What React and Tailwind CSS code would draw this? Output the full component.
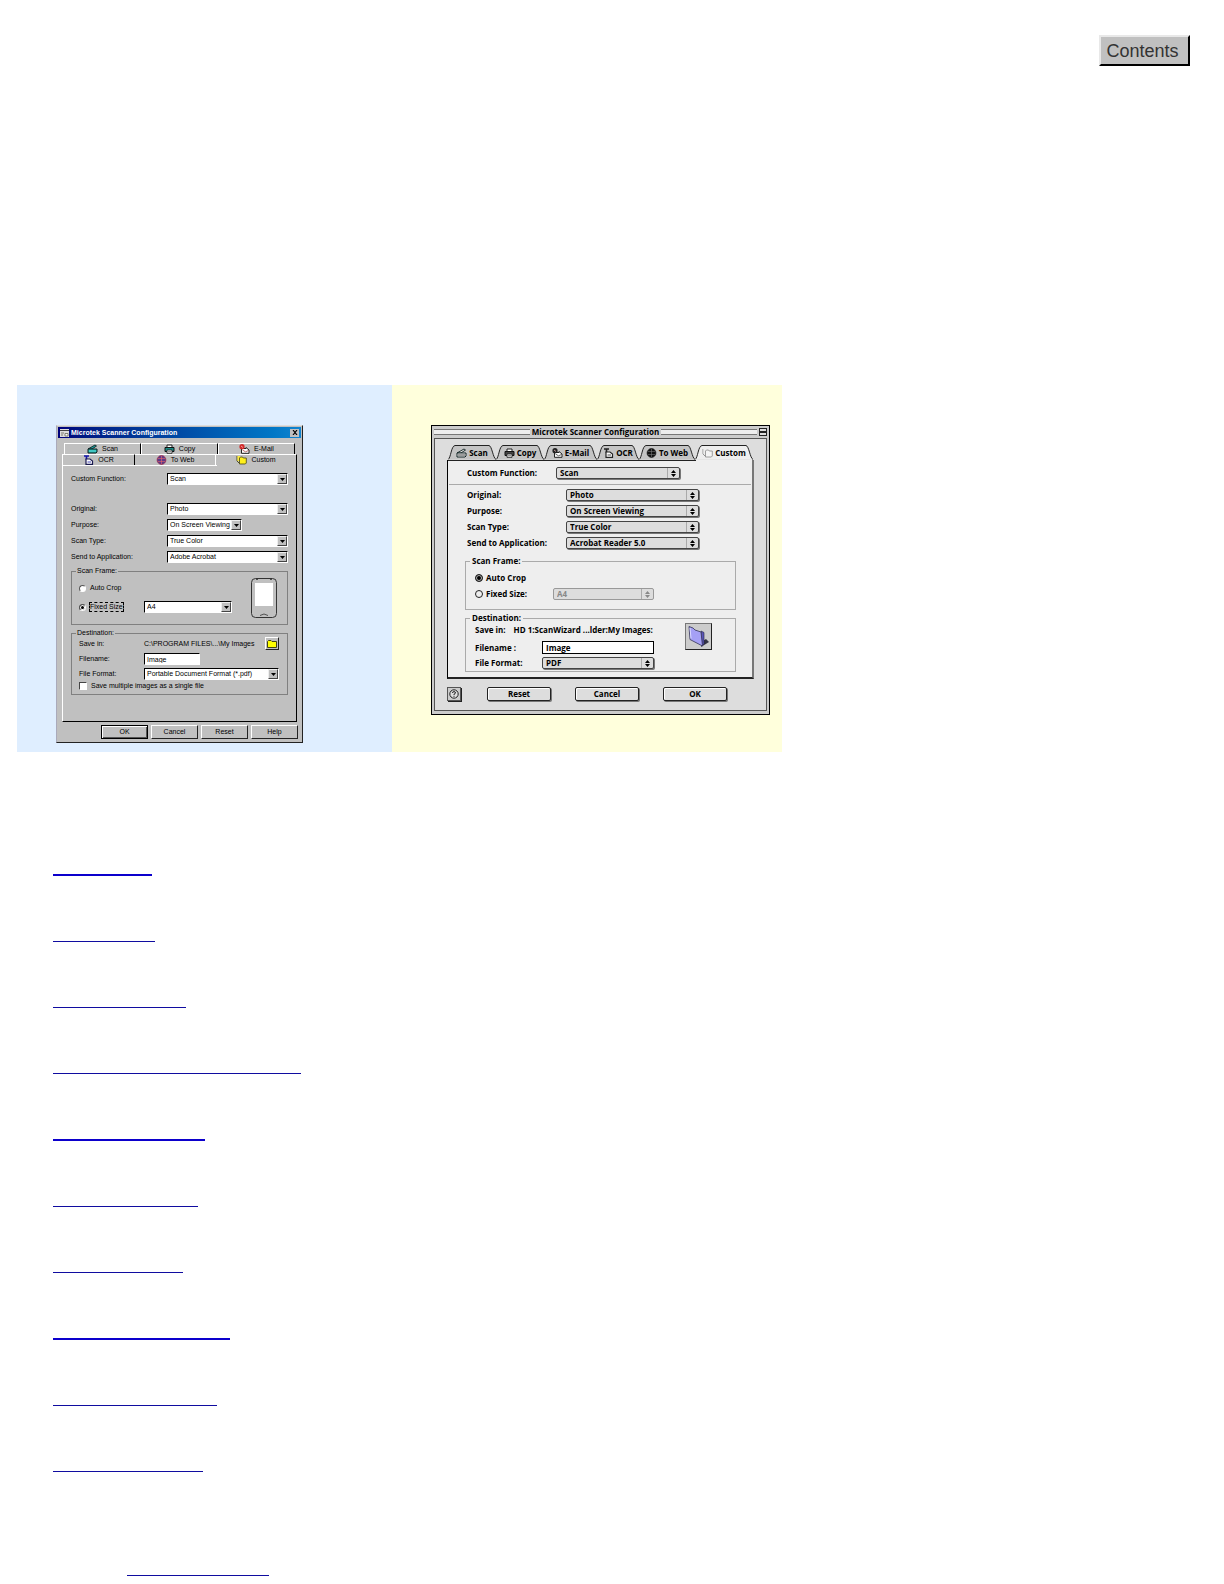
import { useState } from "react";
import clsx from "clsx";

const topics = [
  { label: "Overview", width: "w-[99px]", heading: true },
  { label: "Original", width: "w-[102px]" },
  { label: "Purpose", width: "w-[133px]" },
  { label: "Send to Application", width: "w-[248px]" },
  { label: "Scan Frame", width: "w-[152px]", heading: true },
  { label: "Auto Crop", width: "w-[145px]" },
  { label: "Fixed Size", width: "w-[130px]" },
  { label: "Destination", width: "w-[177px]", heading: true },
  { label: "Filename", width: "w-[164px]" },
  { label: "File Format", width: "w-[150px]" },
];

// Small toolbar icons, shared by both dialogs (color on Windows, dark on Mac)
function TabIcon({ name, mono }) {
  const c = (color) => (mono ? "#222" : color);
  return (
    <svg className="h-[10px] w-[11px] shrink-0" viewBox="0 0 11 10" aria-hidden="true">
      {name === "scan" && (
        <>
          <path d="M1 5 L8 1 L9.5 2 L5 5 Z" fill={mono ? "#ddd" : "#1aa5a5"} stroke="#122" strokeWidth="0.9" />
          <path d="M1 5 H10 V8 L9 9 H1 Z" fill={mono ? "#eee" : "#20b0a8"} stroke="#122" strokeWidth="1" />
          <path d="M2 7 H9" stroke={mono ? "#222" : "#7ee"} strokeWidth="0.8" />
        </>
      )}
      {name === "copy" && (
        <>
          <path d="M3 4 V1 H8 V4" fill="#fff" stroke="#222" strokeWidth="1" />
          <path d="M1 3.5 H10 V7.5 H1 Z" fill={mono ? "#444" : "#1b8a84"} stroke="#111" strokeWidth="1" />
          <path d="M3 6 H8 V9.3 H3 Z" fill="#fff" stroke="#222" strokeWidth="0.9" />
          <path d="M4 7.7 H7" stroke="#222" strokeWidth="0.6" />
        </>
      )}
      {name === "mail" && (
        <>
          <path d="M2.5 4.5 H7 V3.5 L10 6 V9.3 H2.5 Z" fill="#fff" stroke="#222" strokeWidth="1" />
          <path d="M3.5 6 L6.5 7.8 L9.5 6.5" fill="none" stroke={c("#933")} strokeWidth="0.7" />
          <circle cx="3" cy="2.7" r="2.6" fill={c("#d22b2b")} />
          <path d="M2 2 L4 3.5" stroke="#fcc" strokeWidth="0.7" />
        </>
      )}
      {name === "ocr" && (
        <>
          <path d="M1 1 H6 M3.5 1 V5" stroke={c("#1414a8")} strokeWidth="1.6" />
          <path d="M3 4 H7 L9.5 6 V9.3 H3 Z" fill="#fff" stroke={c("#1a1a50")} strokeWidth="1.2" />
          <path d="M4.5 7 H8" stroke={c("#1414a8")} strokeWidth="0.8" />
        </>
      )}
      {name === "web" && (
        <>
          <circle cx="5.5" cy="5" r="4.4" fill={mono ? "#111" : "#5a3a8c"} stroke={mono ? "#111" : "#a02040"} strokeWidth="0.7" />
          <path
            d="M2 3.5 H9 M2 6.5 H9 M5.5 1 V9"
            fill="none"
            stroke={mono ? "#777" : "#e66"}
            strokeWidth="0.6"
          />
        </>
      )}
      {name === "custom" && (
        <>
          <path d="M1 1 V6 L3.5 8.5" fill="none" stroke={mono ? "#888" : "#441"} strokeWidth="0.9" />
          <path d="M1.5 1 H4 V6 H1.5 Z" fill={mono ? "#eee" : "#ffec3d"} />
          <path
            d="M3.5 3 L4.5 2 H6.5 L7.3 3 H10.3 V8 L9.3 9 H3.5 Z"
            fill={mono ? "#f4f4f4" : "#fff01c"}
            stroke={mono ? "#888" : "#441"}
            strokeWidth="0.8"
          />
        </>
      )}
    </svg>
  );
}

/* ---------- Windows dialog ---------- */

function WinSelect({ id, value, className }) {
  return (
    <span
      className={clsx(
        "flex h-3 border border-t-black border-l-black border-r-white border-b-white bg-white",
        className
      )}
    >
      <select id={id} className="min-w-0 flex-1 appearance-none bg-white pl-[2px] leading-[10px] text-black outline-none">
        <option>{value}</option>
      </select>
      <span className="pointer-events-none flex w-[10px] items-center justify-center border border-t-[#eee] border-l-[#eee] border-r-[#444] border-b-[#444] bg-[#c0c0c0]">
        <svg className="h-[3px] w-[5px]" viewBox="0 0 5 3" aria-hidden="true">
          <path d="M0 0 H5 L2.5 3 Z" fill="#000" />
        </svg>
      </span>
    </span>
  );
}

function WinRow({ id, label, value, wide = true }) {
  return (
    <div className="flex h-3 items-center">
      <label htmlFor={id} className="w-[96px]">
        {label}
      </label>
      <WinSelect id={id} value={value} className={wide ? "w-[121px]" : "w-[75px]"} />
    </div>
  );
}

function WinTab({ icon, label, className }) {
  return (
    <button type="button" role="tab" className={clsx("flex items-center justify-center gap-1", className)}>
      <TabIcon name={icon} />
      {label}
    </button>
  );
}

function WinRadio({ id, label, checked, onChange }) {
  return (
    <span className="flex w-[65px] items-center gap-1">
      <input
        type="radio"
        id={id}
        name="win-frame"
        checked={checked}
        onChange={onChange}
        className="h-[7px] w-[7px] shrink-0 appearance-none rounded-full border border-t-[#555] border-l-[#555] border-r-white border-b-white bg-white checked:bg-black checked:shadow-[inset_0_0_0_1px_#fff]"
      />
      <label htmlFor={id} className={clsx("whitespace-nowrap", checked && "outline-1 outline-dashed outline-black")}>
        {label}
      </label>
    </span>
  );
}

function WindowsDialog() {
  const [frame, setFrame] = useState("fixed");
  const raised = "border border-t-white border-l-white border-r-[#222] border-b-[#222]";
  const tab = "h-[11px] border-t border-l border-r border-t-white border-l-white border-r-black";

  return (
    <section className="flex w-[247px] flex-col border border-t-[#ddd] border-l-[#aab] border-r-[#222] border-b-[#222] bg-[#c0c0c0] p-px font-['Liberation_Sans',Arial,sans-serif] text-[7px] leading-[8px] text-black">
      <header className="flex h-[11px] items-center gap-[2px] bg-linear-to-r from-[#00007b] to-[#1084d0] px-[2px] text-white">
        <svg className="h-[8px] w-[9px]" viewBox="0 0 9 8" aria-hidden="true">
          <rect width="9" height="8" fill="#ddd" />
          <path d="M0 1.5 H9" stroke="#444" />
          <path d="M1 4 H4 M1 6 H3 M5 4.5 H8 V7 H5 Z" stroke="#665" strokeWidth="0.8" fill="#fff" />
        </svg>
        <h2 className="flex-1 font-bold">Microtek Scanner Configuration</h2>
        <button type="button" aria-label="Close" className="flex h-[8px] w-[9px] items-center justify-center bg-[#c0c0c0]">
          <svg className="h-[5px] w-[6px]" viewBox="0 0 6 5" aria-hidden="true">
            <path d="M1 0 L5 5 M5 0 L1 5" stroke="#000" strokeWidth="1.2" />
          </svg>
        </button>
      </header>

      <div role="tablist" className="mx-1 mt-[5px]">
        <div className="flex px-[2px]">
          <WinTab icon="scan" label="Scan" className={clsx(tab, "flex-1")} />
          <WinTab icon="copy" label="Copy" className={clsx(tab, "flex-1")} />
          <WinTab icon="mail" label="E-Mail" className={clsx(tab, "flex-1")} />
        </div>
        <div className="flex">
          <WinTab icon="ocr" label="OCR" className={clsx(tab, "w-[73px]")} />
          <WinTab icon="web" label="To Web" className="h-[11px] w-[81px] border-t border-r border-white" />
          <WinTab icon="custom" label="Custom" className="h-[11px] flex-1 border-t border-r border-t-white border-r-black" />
        </div>
      </div>

      <div className="mx-1 border border-t-0 border-l-white border-r-black border-b-black pb-[26px]">
        <div className="flex">
          <span className="h-px w-[154px] bg-white" />
        </div>
        <div className="mx-2 mt-[7px] flex flex-col gap-1">
          <WinRow id="win-function" label="Custom Function:" value="Scan" />
          <div className="mt-[14px]">
            <WinRow id="win-original" label="Original:" value="Photo" />
          </div>
          <WinRow id="win-purpose" label="Purpose:" value="On Screen Viewing" wide={false} />
          <WinRow id="win-type" label="Scan Type:" value="True Color" />
          <WinRow id="win-send" label="Send to Application:" value="Adobe Acrobat" />

          <fieldset className="border border-[#808080] px-[7px] pb-[6px]">
            <legend className="ml-[-3px] px-px">Scan Frame:</legend>
            <div className="flex justify-between">
              <div className="flex flex-col gap-[7px] pt-[7px]">
                <div className="flex h-3 items-center">
                  <WinRadio
                    id="win-auto"
                    label="Auto Crop"
                    checked={frame === "auto"}
                    onChange={() => setFrame("auto")}
                  />
                </div>
                <div className="flex h-3 items-center">
                  <WinRadio
                    id="win-fixed"
                    label="Fixed Size"
                    checked={frame === "fixed"}
                    onChange={() => setFrame("fixed")}
                  />
                  <WinSelect id="win-size" value="A4" className="w-[88px]" />
                </div>
              </div>
              <svg className="mt-[3px] mr-[3px] h-10 w-[26px]" viewBox="0 0 26 40" aria-hidden="true">
                <rect x="0.5" y="0.5" width="25" height="39" rx="4" fill="#c0c0c0" stroke="#333" />
                <rect x="4" y="5" width="18" height="23" fill="#fff" />
                <path d="M5 1.5 H7 M19 1.5 H21 M9 37.5 Q13 34.5 17 37.5" fill="none" stroke="#333" strokeWidth="0.8" />
              </svg>
            </div>
          </fieldset>

          <fieldset className="border border-[#808080] px-[7px] pb-1">
            <legend className="ml-[-3px] px-px">Destination:</legend>
            <div className="flex flex-col gap-[3px]">
              <div className="flex h-[13px] items-center">
                <span className="w-[65px]">Save in:</span>
                <span className="flex-1 whitespace-nowrap">C:\PROGRAM FILES\...\My Images</span>
                <button
                  type="button"
                  aria-label="Browse"
                  className={clsx("mr-px flex h-[13px] w-[14px] items-center justify-center", raised)}
                >
                  <svg className="h-[8px] w-[10px]" viewBox="0 0 10 8" aria-hidden="true">
                    <path d="M0.5 1.5 L1.5 0.5 H4 L5 1.5 H9.5 V7.5 H0.5 Z" fill="#ffff00" stroke="#441" />
                  </svg>
                </button>
              </div>
              <div className="flex h-3 items-center">
                <label htmlFor="win-filename" className="w-[65px]">
                  Filename:
                </label>
                <input
                  id="win-filename"
                  defaultValue="Image"
                  className="h-3 w-[56px] border border-t-black border-l-black border-r-white border-b-white bg-white px-[2px] leading-[8px] outline-none"
                />
              </div>
              <div className="flex h-3 items-center">
                <label htmlFor="win-format" className="w-[65px]">
                  File Format:
                </label>
                <WinSelect id="win-format" value="Portable Document Format (*.pdf)" className="w-[135px]" />
              </div>
            </div>
            <div className="mt-[2px] flex items-center gap-1">
              <input
                type="checkbox"
                id="win-multi"
                className="h-[8px] w-[8px] appearance-none border border-t-[#444] border-l-[#444] border-r-white border-b-white bg-white checked:bg-black"
              />
              <label htmlFor="win-multi">Save multiple images as a single file</label>
            </div>
          </fieldset>
        </div>
      </div>

      <footer className="mr-[3px] mt-[3px] mb-[2px] flex justify-end gap-[3px]">
        <button type="button" className="h-[14px] w-[47px] border border-black shadow-[inset_1px_1px_#fff,inset_-1px_-1px_#555]">
          OK
        </button>
        <button type="button" className={clsx("h-[14px] w-[47px]", raised)}>
          Cancel
        </button>
        <button type="button" className={clsx("h-[14px] w-[47px]", raised)}>
          Reset
        </button>
        <button type="button" className={clsx("h-[14px] w-[47px]", raised)}>
          Help
        </button>
      </footer>
    </section>
  );
}

/* ---------- Mac dialog ---------- */

function MacSelect({ id, value, disabled, className }) {
  return (
    <span
      className={clsx(
        "flex h-3 rounded-[2px] border bg-[#ddd]",
        disabled ? "border-[#999] text-[#888]" : "border-[#444] shadow-[1px_1px_#777]",
        className
      )}
    >
      <select
        id={id}
        disabled={disabled}
        className="min-w-0 flex-1 appearance-none bg-transparent pl-[3px] leading-[10px] font-bold outline-none"
      >
        <option>{value}</option>
      </select>
      <span className="pointer-events-none flex w-3 items-center justify-center border-l border-[#aaa]">
        <svg className="h-[7px] w-[5px]" viewBox="0 0 5 7" aria-hidden="true">
          <path d="M0 3 L2.5 0 L5 3 Z M0 4 H5 L2.5 7 Z" fill="currentColor" />
        </svg>
      </span>
    </span>
  );
}

function MacTab({ icon, label, width, active }) {
  const fill = active ? "#eee" : "#c4c4c4";
  return (
    <button
      type="button"
      role="tab"
      aria-selected={!!active}
      className="relative flex h-[15px] items-center justify-center gap-[2px]"
      style={{ width }}
    >
      <svg className="absolute inset-0 h-full w-full" viewBox={`0 0 ${width} 15`} aria-hidden="true">
        <path
          d={`M0 14.5 C3 13 3 1 7 0.5 H${width - 7} C${width - 4} 1 ${width - 3} 13 ${width} 14.5`}
          fill={fill}
          stroke="#222"
        />
      </svg>
      <span className="relative flex">
        <TabIcon name={icon} mono />
      </span>
      <span className="relative whitespace-nowrap">{label}</span>
    </button>
  );
}

function MacRow({ id, label, value }) {
  return (
    <div className="flex h-3 items-center">
      <label htmlFor={id} className="w-[99px]">
        {label}
      </label>
      <MacSelect id={id} value={value} className="w-[133px]" />
    </div>
  );
}

function MacRadio({ id, label, checked, onChange }) {
  return (
    <span className="flex w-[78px] items-center gap-[3px]">
      <input
        type="radio"
        id={id}
        name="mac-frame"
        checked={checked}
        onChange={onChange}
        className="h-[8px] w-[8px] shrink-0 appearance-none rounded-full border border-[#222] bg-[#eee] checked:bg-black checked:shadow-[inset_0_0_0_1px_#bbb]"
      />
      <label htmlFor={id} className="whitespace-nowrap">
        {label}
      </label>
    </span>
  );
}

function MacButton({ children }) {
  return (
    <button
      type="button"
      className="h-[14px] w-[64px] rounded-[2px] border border-[#222] bg-[#ddd] shadow-[inset_1px_1px_#fff,1px_1px_#777]"
    >
      {children}
    </button>
  );
}

function MacDialog() {
  const [frame, setFrame] = useState("auto");

  return (
    <section className="flex w-[339px] flex-col border border-black bg-[#ccc] px-[2px] pb-[3px] font-['Open_Sans','Liberation_Sans',sans-serif] text-[8px] leading-[8px] font-bold text-black">
      <header className="flex h-3 items-center gap-[2px]">
        <span className="h-[6px] flex-1 border-y border-[#777] bg-[#eee]" />
        <h2>Microtek Scanner Configuration</h2>
        <span className="h-[6px] flex-1 border-y border-[#777] bg-[#eee]" />
        <button type="button" aria-label="Collapse" className="flex h-[8px] w-[8px] items-center border border-[#222] bg-[#ddd]">
          <span className="h-[2px] w-full border-y border-[#222]" />
        </button>
      </header>

      <div className="border border-[#555] bg-[#ddd] px-3 pt-[6px] pb-[9px]">
        <div role="tablist" className="flex pl-px">
          <MacTab icon="scan" label="Scan" width={48} />
          <MacTab icon="copy" label="Copy" width={48} />
          <MacTab icon="mail" label="E-Mail" width={53} />
          <MacTab icon="ocr" label="OCR" width={42} />
          <MacTab icon="web" label="To Web" width={56} />
          <MacTab icon="custom" label="Custom" width={58} active />
        </div>

        <div className="border-l border-b-2 border-r-2 border-l-black border-b-[#222] border-r-[#777] bg-[#eee] pb-[5px]">
          <div className="flex">
            <span className="h-px w-[248px] bg-[#222]" />
          </div>
          <div className="mt-[6px] flex h-3 items-center pl-[19px]">
            <label htmlFor="mac-function" className="w-[89px]">
              Custom Function:
            </label>
            <MacSelect id="mac-function" value="Scan" className="w-[124px]" />
          </div>
          <hr className="mx-px mt-[5px] mb-1 border-[#aaa]" />
          <div className="flex flex-col gap-1 pl-[19px]">
            <MacRow id="mac-original" label="Original:" value="Photo" />
            <MacRow id="mac-purpose" label="Purpose:" value="On Screen Viewing" />
            <MacRow id="mac-type" label="Scan Type:" value="True Color" />
            <MacRow id="mac-send" label="Send to Application:" value="Acrobat Reader 5.0" />
          </div>

          <fieldset className="mt-[8px] mr-4 ml-[17px] border border-[#aaa] px-[9px] pb-[9px]">
            <legend className="ml-[-5px] px-[2px]">Scan Frame:</legend>
            <div className="flex flex-col gap-1 pt-[7px]">
              <div className="flex h-3 items-center">
                <MacRadio
                  id="mac-auto"
                  label="Auto Crop"
                  checked={frame === "auto"}
                  onChange={() => setFrame("auto")}
                />
              </div>
              <div className="flex h-3 items-center">
                <MacRadio
                  id="mac-fixed"
                  label="Fixed Size:"
                  checked={frame === "fixed"}
                  onChange={() => setFrame("fixed")}
                />
                <MacSelect id="mac-size" value="A4" disabled={frame !== "fixed"} className="w-[101px]" />
              </div>
            </div>
          </fieldset>

          <fieldset className="mt-1 mr-4 ml-[17px] border border-[#aaa] px-[9px] pb-[2px]">
            <legend className="ml-[-5px] px-[2px]">Destination:</legend>
            <div className="flex items-start justify-between pt-px">
              <div className="flex flex-col">
                <div className="flex h-[14px] items-center gap-2">
                  <span className="whitespace-nowrap">Save in:</span>
                  <span className="whitespace-nowrap">HD 1:ScanWizard ...lder:My Images:</span>
                </div>
                <div className="mt-[4px] flex h-[13px] items-center">
                  <label htmlFor="mac-filename" className="w-[67px]">
                    Filename :
                  </label>
                  <input
                    id="mac-filename"
                    defaultValue="Image"
                    className="h-[13px] w-[112px] border border-black bg-white px-[3px] outline-none"
                  />
                </div>
                <div className="mt-[3px] flex h-3 items-center">
                  <label htmlFor="mac-format" className="w-[67px]">
                    File Format:
                  </label>
                  <MacSelect id="mac-format" value="PDF" className="w-[112px]" />
                </div>
              </div>
              <button
                type="button"
                aria-label="Choose folder"
                className="mr-[14px] flex h-[27px] w-[27px] shrink-0 items-center justify-center border border-t-[#777] border-l-[#777] border-r-[#222] border-b-[#222] bg-[#ccc]"
              >
                <svg className="h-[23px] w-[23px]" viewBox="0 0 23 23" aria-hidden="true">
                  <path d="M14 22 L22 17 L19 14 L14 17 Z" fill="#334" />
                  <path d="M14 6 L17 7.5 V19 L15 21 Z" fill="#5a55b8" stroke="#224" strokeWidth="0.6" />
                  <path d="M2 1.5 L6 3 L8 5 L14 7 L15.5 21 L3 14.5 Z" fill="#a5a0f5" stroke="#335" strokeWidth="0.8" />
                  <path d="M3 3 L4 13.5" stroke="#dcdcff" />
                </svg>
              </button>
            </div>
          </fieldset>
        </div>

        <footer className="mt-2 flex items-center">
          <button
            type="button"
            aria-label="Help"
            className="flex h-[14px] w-[14px] items-center justify-center border border-[#555] bg-[#ccc] shadow-[1px_1px_#222]"
          >
            <svg className="h-[10px] w-[10px]" viewBox="0 0 10 10" aria-hidden="true">
              <circle cx="5" cy="5" r="4.2" fill="#ddd" stroke="#222" />
              <path d="M3.5 4 Q3.5 2.6 5 2.6 Q6.5 2.6 6.5 4 Q6.3 4.8 5 5.2 V6 M5 6.8 V7.8" fill="none" stroke="#222" />
            </svg>
          </button>
          <div className="ml-[26px] flex gap-6">
            <MacButton>Reset</MacButton>
            <MacButton>Cancel</MacButton>
            <MacButton>OK</MacButton>
          </div>
        </footer>
      </div>
    </section>
  );
}

export default function App() {
  return (
    <main className="bg-white pb-2">
      <nav className="flex justify-end pt-[35px] pr-[34px]">
        <button
          type="button"
          className="h-[31px] w-[91px] border-2 border-t-[#e8e8e8] border-l-[#e8e8e8] border-r-black border-b-black bg-[#c0c0c0] pr-1 font-['Liberation_Sans',Arial,sans-serif] text-[18px] leading-[20px] text-[#333]"
        >
          Contents
        </button>
      </nav>

      {/* Side by side dialogs */}
      <div className="mt-[319px] flex pl-[17px]">
        <div className="bg-[#dfeeff] pt-10 pr-[89px] pb-[9px] pl-[39px]">
          <WindowsDialog />
        </div>
        <div className="bg-[#ffffdc] pt-10 pr-3 pl-[39px]">
          <MacDialog />
        </div>
      </div>

      {/* Topic links */}
      <ul className="mt-[57px] pl-[53px]">
        {topics.map((t) => (
          <li key={t.label} className={clsx("flex items-end", t.heading ? "h-[67px]" : "h-[66px]")}>
            <a
              href="#top"
              aria-label={t.label}
              className={clsx(
                "block h-6",
                t.width,
                t.heading ? "border-b-2 border-[#0c00cc]" : "border-b border-[#100ca0]"
              )}
            />
          </li>
        ))}
      </ul>
      <div className="mt-20 pl-[127px]">
        <a href="#top" aria-label="Back to top" className="block h-6 w-[142px] border-b border-[#100ca0]" />
      </div>
    </main>
  );
}
